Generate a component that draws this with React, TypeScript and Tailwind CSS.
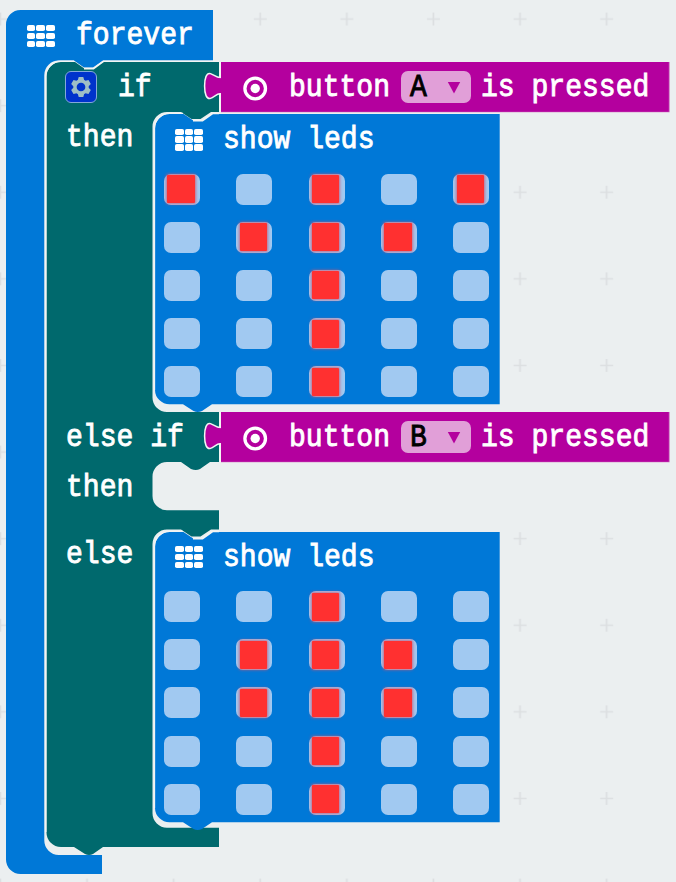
import React from "react";

const LEDS_TOP = ["#.#.#", ".###.", "..#..", "..#..", "..#.."];
const LEDS_BOTTOM = ["..#..", ".###.", ".###.", "..#..", "..#.."];

function Label({ children, className = "" }: { children: React.ReactNode; className?: string }) {
  return (
    <span
      className={`block shrink-0 origin-left scale-x-[0.8765] whitespace-pre pt-[3px] font-['Liberation_Mono',monospace] text-[32px] leading-[36px] [-webkit-text-stroke:0.9px_currentColor] ${className}`}
    >
      {children}
    </span>
  );
}

function GridIcon() {
  return (
    <div className="grid h-[22px] w-[28px] shrink-0 grid-cols-3 grid-rows-3 gap-x-[1.2px] gap-y-[1.6px]">
      {Array.from({ length: 9 }, (_, i) => (
        <i key={i} className="rounded-[1.8px] bg-white" />
      ))}
    </div>
  );
}

function GearButton() {
  return (
    <div className="flex h-[32px] w-[32px] shrink-0 items-center justify-center rounded-[6px] border-[1.5px] border-[#84a9d8] bg-[#0033cc]">
      <svg width="22" height="22" viewBox="-11 -11 22 22">
        <g fill="#9ebfc5">
          {[0, 60, 120, 180, 240, 300].map((a) => (
            <path key={a} d="M-3.4 -6 L-2.3 -10 H2.3 L3.4 -6Z" transform={`rotate(${a})`} />
          ))}
        </g>
        <circle r="6" fill="none" stroke="#9ebfc5" strokeWidth="3.3" />
      </svg>
    </div>
  );
}

function PressedBlock({ name }: { name: string }) {
  return (
    <div className="relative -ml-px flex h-[50px] w-[465.5px] shrink-0 items-start text-white">
      <svg className="absolute left-0 top-0 overflow-visible" width="466" height="51" viewBox="0 0 466 51">
        <path d="M16 0V50" stroke="#f3f5f4" strokeWidth="2" />
        <path d="M18 15.5H15.800C13 15.500 10 13 6.500 11.600C2.500 10.500 .6 16 .6 24S2.500 37.500 6.500 36.400C10 35 13 31.700 15.800 31.700H18Z" fill="#b4009e" stroke="#f3f5f4" strokeWidth="1.500" />
        <path d="M14.500 16.500H18V30.800H14.500Z" fill="#b4009e" />
        <path d="M17 0H465.500V50H17Z" fill="#b4009e" />
        <path d="M17 50.300H465.300V0" fill="none" stroke="#deb0d8" strokeWidth=".7" />
      </svg>
      <svg className="relative ml-[38px] mt-[14px] shrink-0" width="26" height="26" viewBox="0 0 26 26">
        <circle cx="13.2" cy="12.5" r="10.3" fill="none" stroke="white" strokeWidth="3.3" />
        <circle cx="13.2" cy="12.5" r="4.7" fill="white" />
      </svg>
      <Label className="relative ml-[21px] mt-[5px] w-[111.5px]">button</Label>
      <div className="relative mt-[9px] flex h-[32px] w-[70.5px] shrink-0 rounded-[7px] bg-[#e19fd8]">
        <Label className="-mt-[4px] ml-[9px] w-[20px] text-black [-webkit-text-stroke:0.5px_currentColor]">{name}</Label>
        <svg className="ml-[17px] mt-[11px]" width="14" height="12"><path d="M.8 0H13.2L7 11.5Z" fill="#b4009e" /></svg>
      </div>
      <Label className="relative ml-[9.5px] mt-[5px]">is pressed</Label>
    </div>
  );
}

function LedMatrix({ rows }: { rows: string[] }) {
  return (
    <div className="ml-[9.5px] grid w-[326px] grid-cols-[repeat(5,36.2px)] gap-x-[36.1px] gap-y-[17.2px]">
      {rows.join("").split("").map((c, i) => (
        <div key={i} className="h-[31px] rounded-[7px] bg-[#a1c9f1]">
          {c === "#" && (
            <div className="ml-[3.4px] mt-[1.5px] h-[28px] w-[27.5px] rounded-[1px] bg-[#ff3030] shadow-[0_0_3px_1px_rgba(205,85,115,0.8)]" />
          )}
        </div>
      ))}
    </div>
  );
}

function LedBlock({ rows }: { rows: string[] }) {
  return (
    <div className="relative flex h-[290.5px] w-[345px] shrink-0 flex-col text-white">
      <svg className="absolute left-0 top-0 overflow-visible" width="345" height="299" viewBox="0 0 345 299">
        <path d="M14.500 0H28.500L39 7H47L57 0H344.700V290.300H57L47 297Q42.500 299 38.500 297L28 290.300H14.500A14.500 14.500 0 0 1 0 276V14.500A14.500 14.500 0 0 1 14.500 0Z" fill="#0078d7" />
        <path d="M-.5 276V14.500A15 15 0 0 1 14.500 -.7H28" fill="none" stroke="#f2f4f3" strokeWidth="1.300" />
        <path d="M38 6.700H47.500L57.500 -.6H64" fill="none" stroke="#f2f4f3" strokeWidth="1.800" />
      </svg>
      <div className="relative flex h-[59.5px] items-start">
        <div className="ml-[20.5px] mt-[14.500px]"><GridIcon /></div>
        <Label className="ml-[20px] mt-[5px]">show leds</Label>
      </div>
      <div className="relative"><LedMatrix rows={rows} /></div>
    </div>
  );
}

function IfBlock() {
  return (
    <div className="relative ml-[46px] flex h-[785px] w-[630px] flex-col text-white">
      <svg className="absolute left-0 top-0 overflow-visible" width="174" height="794" viewBox="46 62 174 794">
        <path
          d="M61 62H75L85 69H93L103 62H219V112H211L200.500 119H191.500L181 112H167A14.500 14.500 0 0 0 152.500 126.500V397.500A14.500 14.500 0 0 0 167 412H219V462H210L200 469Q196 471 191 469L181 462H167A14.500 14.500 0 0 0 152.500 476.500V496A14.500 14.500 0 0 0 167 510.300H219V529.500H211L200.500 536.500H191.500L181 529.500H167A14.500 14.500 0 0 0 152.500 544V813.300A14.500 14.500 0 0 0 167 827.700H219V847H103L93 854Q89 856 85 854L74 847H61A14.500 14.500 0 0 1 46.500 832.500V76.500A14.500 14.500 0 0 1 61 62Z"
          fill="#00696d"
        />
        <path d="M45.700 832V76.500A15 15 0 0 1 61 61.200H74M84 68.600H93.500L103.500 61.300H219" fill="none" stroke="#f3f5f4" strokeWidth="1.6" />
      </svg>
      <div className="relative flex h-[50px] items-start">
        <div className="ml-[19px] mt-[9px]"><GearButton /></div>
        <Label className="ml-[21px] mt-[5px] w-[87px]">if</Label>
        <PressedBlock name="A" />
      </div>
      <div className="relative flex h-[300px] items-start">
        <Label className="ml-[20px] mt-[5px] w-[88.500px]">then</Label>
        <div className="mt-[2px]"><LedBlock rows={LEDS_TOP} /></div>
      </div>
      <div className="relative flex h-[50px] items-start">
        <Label className="ml-[20px] mt-[5px] w-[139px]">else if</Label>
        <PressedBlock name="B" />
      </div>
      <div className="relative h-[67.500px]">
        <Label className="ml-[20px] mt-[5px] w-[88.500px]">then</Label>
      </div>
      <div className="relative flex items-start">
        <Label className="ml-[20px] mt-[4.500px] w-[88.500px]">else</Label>
        <div className="mt-[2px]"><LedBlock rows={LEDS_BOTTOM} /></div>
      </div>
    </div>
  );
}

export default function App() {
  return (
    <main className="relative h-[882px] w-[676px] overflow-hidden bg-[#ebeff0]">
      <svg className="absolute inset-0" width="676" height="882">
        <defs>
          <pattern id="canvas-grid" x="-42.750" y="-24.250" width="86.600" height="86.600" patternUnits="userSpaceOnUse">
            <path d="M36.700 43.300H49.700M43.200 36.800V49.800" stroke="#dcdfe1" strokeWidth="1.700" />
          </pattern>
        </defs>
        <rect width="676" height="882" fill="url(#canvas-grid)" />
        <path d="M20.500 10H213V60.500H103L93 67.500H84L74 60.500H59A14.500 14.500 0 0 0 44.300 75V840.300A14.500 14.500 0 0 0 59 855H102V874H20.500A14.500 14.500 0 0 1 6 859.500V24.500A14.500 14.500 0 0 1 20.500 10Z" fill="#0078d7" />
      </svg>
      <div className="relative flex h-[62px] items-start pt-[10px] text-white">
        <div className="ml-[26.500px] mt-[15px]"><GridIcon /></div>
        <Label className="ml-[21px] mt-[5px]">forever</Label>
      </div>
      <IfBlock />
    </main>
  );
}
